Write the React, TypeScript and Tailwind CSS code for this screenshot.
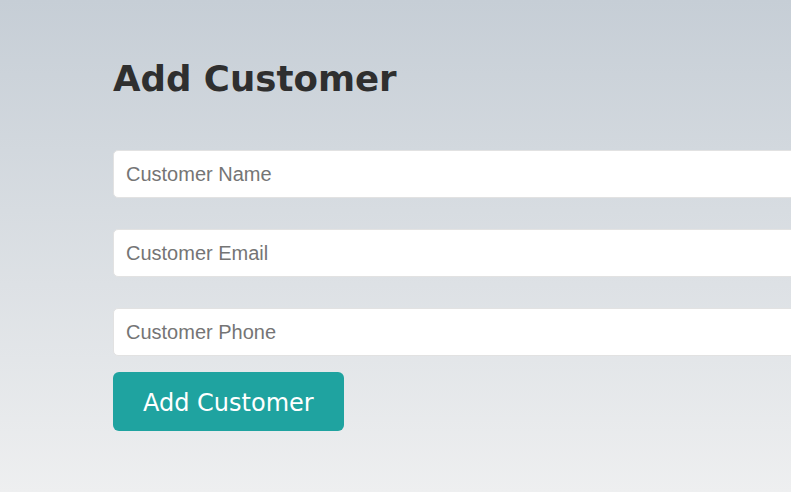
export default function App() {
  return (
    <div className="h-[492px] w-[791px] overflow-hidden bg-gradient-to-b from-[#c6ced6] to-[#eeeff0]">
      <div className="flex flex-col pl-[113px] pt-[57px]">
        <h1 className="text-[35.6px] font-bold leading-[44px] text-[#2f2f2f] [font-family:'DejaVu_Sans',Verdana,sans-serif]">
          Add Customer
        </h1>
        <form className="mt-[49px] flex flex-col">
          <input
            type="text"
            placeholder="Customer Name"
            className="h-[48px] w-[720px] shrink-0 rounded-[5px] border border-[#e2e2e2] bg-white px-[12px] text-[20px] text-[#333] placeholder:text-[#757575] [font-family:'Liberation_Sans',Arial,sans-serif] outline-none"
          />
          <input
            type="text"
            placeholder="Customer Email"
            className="mt-[31px] h-[48px] w-[720px] shrink-0 rounded-[5px] border border-[#e2e2e2] bg-white px-[12px] text-[20px] text-[#333] placeholder:text-[#757575] [font-family:'Liberation_Sans',Arial,sans-serif] outline-none"
          />
          <input
            type="text"
            placeholder="Customer Phone"
            className="mt-[31px] h-[48px] w-[720px] shrink-0 rounded-[5px] border border-[#e2e2e2] bg-white px-[12px] text-[20px] text-[#333] placeholder:text-[#757575] [font-family:'Liberation_Sans',Arial,sans-serif] outline-none"
          />
          <div className="mt-[16px]">
            <button
              type="button"
              className="h-[59px] rounded-[6px] bg-[#1fa3a0] px-[30px] pt-[2px] text-[24px] text-white [font-family:'DejaVu_Sans',Verdana,sans-serif]"
            >
              Add Customer
            </button>
          </div>
        </form>
      </div>
    </div>
  );
}
